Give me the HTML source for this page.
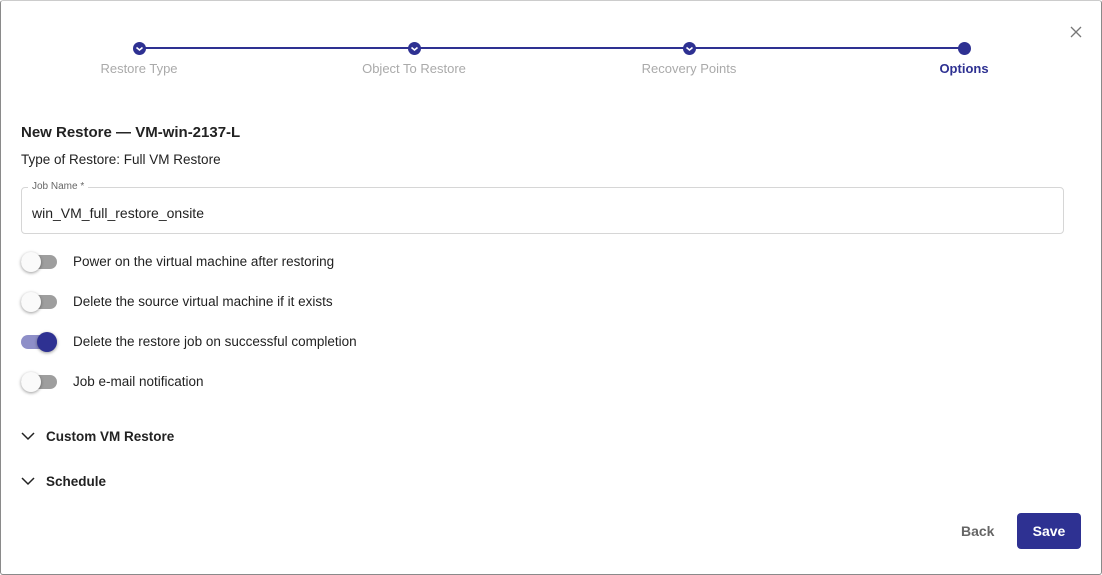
<!DOCTYPE html>
<html><head><style>
*{margin:0;padding:0;box-sizing:border-box}
body{width:1102px;height:575px;background:#fff;font-family:"Liberation Sans",sans-serif;position:relative;overflow:hidden;color:#222}
.frame{position:absolute;left:0;top:0;width:1102px;height:575px;border:1px solid #8a8a8a;border-top:1px solid #ccc;border-radius:3px}
.abs{position:absolute;white-space:nowrap}
.dot{position:absolute;width:13px;height:13px;border-radius:50%;background:#2e3192;top:42px}
.lbl{position:absolute;top:61px;font-size:13px;color:#aaa;transform:translateX(-50%)}
.track{position:absolute;left:21px;width:36px;height:14px;border-radius:7px;background:#9e9e9e}
.knob{position:absolute;width:20px;height:20px;border-radius:50%;background:#fafafa;box-shadow:0 1px 3px rgba(0,0,0,.4)}
.opt{position:absolute;left:73px;font-size:13.5px;color:#222}
</style></head><body>
<div class="frame"></div>
<svg class="abs" style="left:1070px;top:26px" width="12" height="12"><path d="M1 1L11 11M11 1L1 11" stroke="#777" stroke-width="1.3"/></svg>
<div class="abs" style="left:139px;top:47px;width:825px;height:2px;background:#2e3192"></div>
<div class="dot" style="left:133px"></div>
<div class="dot" style="left:408px"></div>
<div class="dot" style="left:683px"></div>
<div class="dot" style="left:958px"></div>
<svg class="abs" style="left:133px;top:42px" width="13" height="13"><path d="M3.5 5.5L6.5 8L9.5 5.5" stroke="#fff" stroke-width="1.6" fill="none"/></svg>
<svg class="abs" style="left:408px;top:42px" width="13" height="13"><path d="M3.5 5.5L6.5 8L9.5 5.5" stroke="#fff" stroke-width="1.6" fill="none"/></svg>
<svg class="abs" style="left:683px;top:42px" width="13" height="13"><path d="M3.5 5.5L6.5 8L9.5 5.5" stroke="#fff" stroke-width="1.6" fill="none"/></svg>
<div class="lbl" style="left:139px">Restore Type</div>
<div class="lbl" style="left:414px">Object To Restore</div>
<div class="lbl" style="left:689px">Recovery Points</div>
<div class="lbl" style="left:964px;color:#2e3192;font-weight:bold">Options</div>
<div class="abs" style="left:21px;top:124px;font-size:15px;font-weight:bold">New Restore — VM-win-2137-L</div>
<div class="abs" style="left:21px;top:152px;font-size:13.5px">Type of Restore: Full VM Restore</div>
<div class="abs" style="left:21px;top:187px;width:1043px;height:47px;border:1px solid #d6d6d6;border-radius:4px"></div>
<div class="abs" style="left:28px;top:181px;font-size:10px;color:#666;background:#fff;padding:0 4px">Job Name *</div>
<div class="abs" style="left:32px;top:205px;font-size:14px">win_VM_full_restore_onsite</div>

<div class="track" style="top:255px"></div><div class="knob" style="left:21px;top:252px"></div>
<div class="opt" style="top:254px">Power on the virtual machine after restoring</div>
<div class="track" style="top:295px"></div><div class="knob" style="left:21px;top:292px"></div>
<div class="opt" style="top:294px">Delete the source virtual machine if it exists</div>
<div class="track" style="top:335px;background:#8e8fc8"></div><div class="knob" style="left:37px;top:332px;background:#2e3192"></div>
<div class="opt" style="top:334px">Delete the restore job on successful completion</div>
<div class="track" style="top:375px"></div><div class="knob" style="left:21px;top:372px"></div>
<div class="opt" style="top:374px">Job e-mail notification</div>

<svg class="abs" style="left:21px;top:431px" width="14" height="10"><path d="M1 2L7 8L13 2" stroke="#222" stroke-width="1.5" fill="none"/></svg>
<div class="abs" style="left:46px;top:429px;font-size:13.5px;font-weight:bold">Custom VM Restore</div>
<svg class="abs" style="left:21px;top:476px" width="14" height="10"><path d="M1 2L7 8L13 2" stroke="#222" stroke-width="1.5" fill="none"/></svg>
<div class="abs" style="left:46px;top:474px;font-size:13.5px;font-weight:bold">Schedule</div>

<div class="abs" style="left:961px;top:523px;font-size:14px;font-weight:bold;color:#666">Back</div>
<div class="abs" style="left:1017px;top:513px;width:64px;height:36px;background:#2e3192;border-radius:4px;color:#fff;font-size:14px;font-weight:bold;text-align:center;line-height:36px">Save</div>
</body></html>
